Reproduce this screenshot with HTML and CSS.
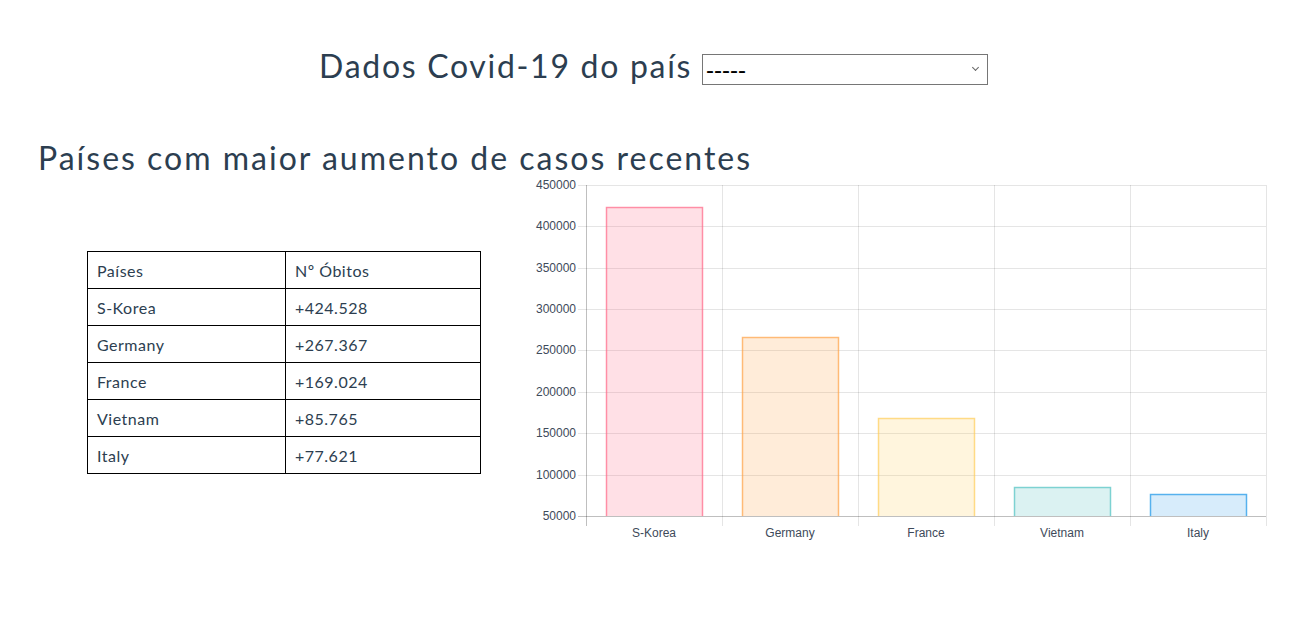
FILE: index.html
```html
<!DOCTYPE html>
<html lang="pt">
<head>
    <meta charset="UTF-8">
    <title>Dados Covid-19</title>
    <link rel="stylesheet" href="styles.css">
</head>
<body>
    <h1 class="titulo">Dados Covid-19 do país
        <span class="caixa-seletor">
            <select id="pais" class="seletor">
                <option value="">-----</option>
            </select>
        </span>
    </h1>

    <h2 class="subtitulo">Países com maior aumento de casos recentes</h2>

    <div class="painel">
        <table class="tabela">
            <tr><th>Países</th><th>Nº Óbitos</th></tr>
            <tr><td>S-Korea</td><td>+424.528</td></tr>
            <tr><td>Germany</td><td>+267.367</td></tr>
            <tr><td>France</td><td>+169.024</td></tr>
            <tr><td>Vietnam</td><td>+85.765</td></tr>
            <tr><td>Italy</td><td>+77.621</td></tr>
        </table>

        <!-- grafico de barras -->
        <svg class="grafico" width="750" height="369" viewBox="0 0 750 369">
            <g class="grade">
                <line x1="57" y1="9.5" x2="745" y2="9.5"/>
                <line x1="57" y1="50.5" x2="745" y2="50.5"/>
                <line x1="57" y1="92.5" x2="745" y2="92.5"/>
                <line x1="57" y1="133.5" x2="745" y2="133.5"/>
                <line x1="57" y1="174.5" x2="745" y2="174.5"/>
                <line x1="57" y1="216.5" x2="745" y2="216.5"/>
                <line x1="57" y1="257.5" x2="745" y2="257.5"/>
                <line x1="57" y1="299.5" x2="745" y2="299.5"/>
                <line x1="201.5" y1="9" x2="201.5" y2="350"/>
                <line x1="337.5" y1="9" x2="337.5" y2="350"/>
                <line x1="473.5" y1="9" x2="473.5" y2="350"/>
                <line x1="609.5" y1="9" x2="609.5" y2="350"/>
                <line x1="745.5" y1="9" x2="745.5" y2="350"/>
            </g>

            <g class="barras">
                <rect x="85" y="31" width="97" height="309" fill="rgba(255,99,132,0.2)"/>
                <path d="M85.5 340V31.5H181.5V340" stroke="rgba(255,99,132,0.65)"/>
                <rect x="221" y="161" width="97" height="179" fill="rgba(255,159,64,0.2)"/>
                <path d="M221.5 340V161.5H317.5V340" stroke="rgba(255,159,64,0.65)"/>
                <rect x="357" y="242" width="97" height="98" fill="rgba(255,205,86,0.2)"/>
                <path d="M357.5 340V242.5H453.5V340" stroke="rgba(255,205,86,0.65)"/>
                <rect x="493" y="311" width="97" height="29" fill="rgba(75,192,192,0.2)"/>
                <path d="M493.5 340V311.5H589.5V340" stroke="rgba(75,192,192,0.65)"/>
                <rect x="629" y="318" width="97" height="22" fill="rgba(54,162,235,0.2)"/>
                <path d="M629.5 340V318.5H725.5V340" stroke="rgba(54,162,235,0.8)"/>
            </g>

            <g class="eixo">
                <line x1="65.5" y1="9" x2="65.5" y2="350"/>
                <line x1="57" y1="340.5" x2="745" y2="340.5"/>
            </g>

            <g class="rotulos-y">
                <text x="55" y="10">450000</text>
                <text x="55" y="51">400000</text>
                <text x="55" y="93">350000</text>
                <text x="55" y="134">300000</text>
                <text x="55" y="175">250000</text>
                <text x="55" y="217">200000</text>
                <text x="55" y="258">150000</text>
                <text x="55" y="300">100000</text>
                <text x="55" y="341">50000</text>
            </g>

            <g class="rotulos-x">
                <text x="133" y="358">S-Korea</text>
                <text x="269" y="358">Germany</text>
                <text x="405" y="358">France</text>
                <text x="541" y="358">Vietnam</text>
                <text x="677" y="358">Italy</text>
            </g>
        </svg>
    </div>
</body>
</html>
```

FILE: styles.css
```css
/* Estilos gerais */
body {
    margin: 0;
    font-family: Lato, "Open Sans", sans-serif;
    color: #2c3e50;
    background: white;
}

/* Titulo com seletor */
.titulo {
    margin: 0;
    padding-top: 46px;
    font-size: 32px;
    font-weight: normal;
    line-height: 40px;
    letter-spacing: 1.7px;
    text-align: center;
}

.caixa-seletor {
    position: relative;
    display: inline-block;
    vertical-align: middle;
    letter-spacing: 0;
}

.caixa-seletor::after {
    content: "";
    position: absolute;
    top: 11px;
    right: 10px;
    width: 4px;
    height: 4px;
    border-right: 1px solid #666;
    border-bottom: 1px solid #666;
    transform: rotate(45deg);
    pointer-events: none;
}

.seletor {
    display: block;
    width: 286px;
    height: 31px;
    padding: 0 3px;
    appearance: none;
    font-family: "Liberation Sans", Arial, sans-serif;
    font-size: 24px;
    line-height: 29px;
    color: black;
    background: white;
    border: 1px solid #767676;
    border-radius: 0;
}

.subtitulo {
    margin: 54px 0 0 38px;
    font-size: 32px;
    font-weight: normal;
    line-height: 36px;
    letter-spacing: 2px;
}

/* Tabela e grafico */
.painel {
    display: flex;
    align-items: flex-start;
    gap: 40px;
    padding-left: 87px;
}

.tabela {
    margin-top: 75px;
    border-collapse: collapse;
    font-size: 16px;
    letter-spacing: 0.5px;
}

.tabela th,
.tabela td {
    height: 36px;
    padding: 0 9px;
    border: 1px solid black;
    text-align: left;
    font-weight: normal;
}

.tabela th:first-child,
.tabela td:first-child {
    width: 179px;
}

.tabela th:last-child,
.tabela td:last-child {
    width: 176px;
}

.grafico {
    display: block;
    flex: none;
}

.grafico .grade line {
    stroke: rgba(0, 0, 0, 0.1);
    stroke-width: 1;
}

.grafico .eixo line {
    stroke: rgba(0, 0, 0, 0.25);
    stroke-width: 1;
}

.grafico .barras path {
    fill: none;
    stroke-width: 1.5;
}

.grafico text {
    font-family: "Liberation Sans", Arial, sans-serif;
    font-size: 12px;
    fill: #3e4a5a;
    dominant-baseline: middle;
}

.rotulos-y text {
    text-anchor: end;
}

.rotulos-x text {
    text-anchor: middle;
}
```
